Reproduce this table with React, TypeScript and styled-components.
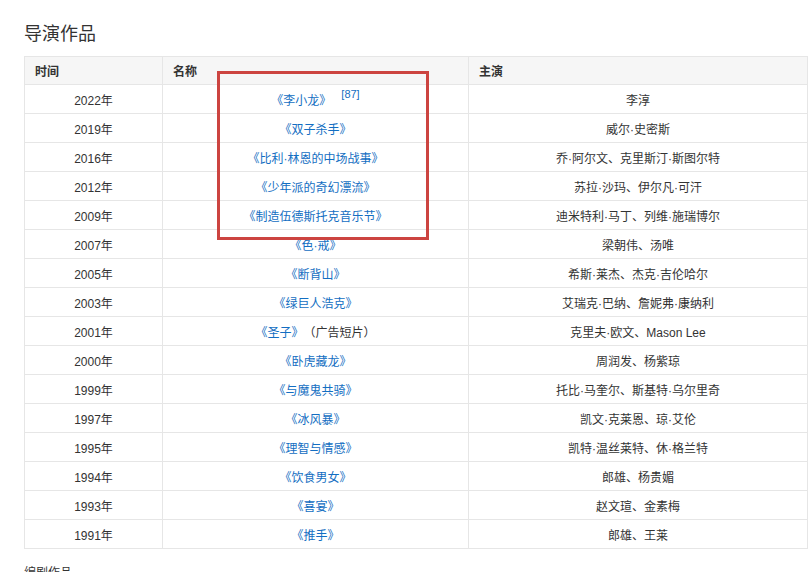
import React from "react";
import styled, {createGlobalStyle} from "styled-components";

type Work = {
    year: string
    title: string
    note?: string
    cite?: string
    cast: string
}

const works: Work[] = [
    {year: '2022年', title: '《李小龙》', cite: '[87]', cast: '李淳'},
    {year: '2019年', title: '《双子杀手》', cast: '威尔·史密斯'},
    {year: '2016年', title: '《比利·林恩的中场战事》', cast: '乔·阿尔文、克里斯汀·斯图尔特'},
    {year: '2012年', title: '《少年派的奇幻漂流》', cast: '苏拉·沙玛、伊尔凡·可汗'},
    {year: '2009年', title: '《制造伍德斯托克音乐节》', cast: '迪米特利·马丁、列维·施瑞博尔'},
    {year: '2007年', title: '《色·戒》', cast: '梁朝伟、汤唯'},
    {year: '2005年', title: '《断背山》', cast: '希斯·莱杰、杰克·吉伦哈尔'},
    {year: '2003年', title: '《绿巨人浩克》', cast: '艾瑞克·巴纳、詹妮弗·康纳利'},
    {year: '2001年', title: '《圣子》', note: '（广告短片）', cast: '克里夫·欧文、Mason Lee'},
    {year: '2000年', title: '《卧虎藏龙》', cast: '周润发、杨紫琼'},
    {year: '1999年', title: '《与魔鬼共骑》', cast: '托比·马奎尔、斯基特·乌尔里奇'},
    {year: '1997年', title: '《冰风暴》', cast: '凯文·克莱恩、琼·艾伦'},
    {year: '1995年', title: '《理智与情感》', cast: '凯特·温丝莱特、休·格兰特'},
    {year: '1994年', title: '《饮食男女》', cast: '郎雄、杨贵媚'},
    {year: '1993年', title: '《喜宴》', cast: '赵文瑄、金素梅'},
    {year: '1991年', title: '《推手》', cast: '郎雄、王莱'},
]

export default function App() {
    return <Page>
        <GlobalStyle/>
        <Title>导演作品</Title>
        <TableWrap>
            <Table>
                <colgroup>
                    <col style={{width: 138}}/>
                    <col style={{width: 306}}/>
                    <col style={{width: 339}}/>
                </colgroup>
                <thead>
                <tr>
                    <Th>时间</Th>
                    <Th>名称</Th>
                    <Th>主演</Th>
                </tr>
                </thead>
                <tbody>
                {works.map(w => <tr key={w.year + w.title}>
                    <Td>{w.year}</Td>
                    <Td>
                        <Link>{w.title}</Link>
                        {w.note && <Note>{w.note}</Note>}
                        {w.cite && <Cite>{w.cite}</Cite>}
                    </Td>
                    <Td>{w.cast}</Td>
                </tr>)}
                </tbody>
            </Table>
            {/* annotation box drawn over the table */}
            <Highlight/>
        </TableWrap>
        <SubTitle>编剧作品</SubTitle>
    </Page>
}

const GlobalStyle = createGlobalStyle`
  html, body {
    margin: 0;
    background: #fff;
    overflow: hidden;
  }
  body {
    font-family: "Liberation Sans", Arial, "Noto Sans CJK SC", sans-serif;
    color: #333;
  }
`

const Page = styled.div`
  padding: 22px 4px 0 24px;
`

const Title = styled.h2`
  margin: 0 0 10px;
  font-size: 18px;
  line-height: 24px;
  font-weight: normal;
  color: #333;
`

const TableWrap = styled.div`
  position: relative;
  width: 783px;
`

const Table = styled.table`
  width: 783px;
  border-collapse: collapse;
  table-layout: fixed;
  font-size: 12px;
`

const Th = styled.th`
  height: 27px;
  padding: 0 10px;
  background: #f6f6f6;
  border: 1px solid #e6e6e6;
  text-align: left;
  font-weight: bold;
  color: #333;
`

const Td = styled.td`
  height: 28px;
  padding: 0 10px;
  border: 1px solid #e6e6e6;
  text-align: center;
  color: #333;
`

const Link = styled.span`
  color: #136ec2;
`

const Note = styled.span`
  margin-left: 6px;
`

const Cite = styled.sup`
  margin-left: 10px;
  font-size: 11px;
  color: #136ec2;
  position: relative;
  top: -2px;
`

const Highlight = styled.div`
  position: absolute;
  left: 193px;
  top: 15px;
  width: 206px;
  height: 163px;
  border: 3px solid #cc4440;
  pointer-events: none;
`

const SubTitle = styled.div`
  margin-top: 16px;
  font-size: 12px;
  line-height: 16px;
  color: #333;
`
